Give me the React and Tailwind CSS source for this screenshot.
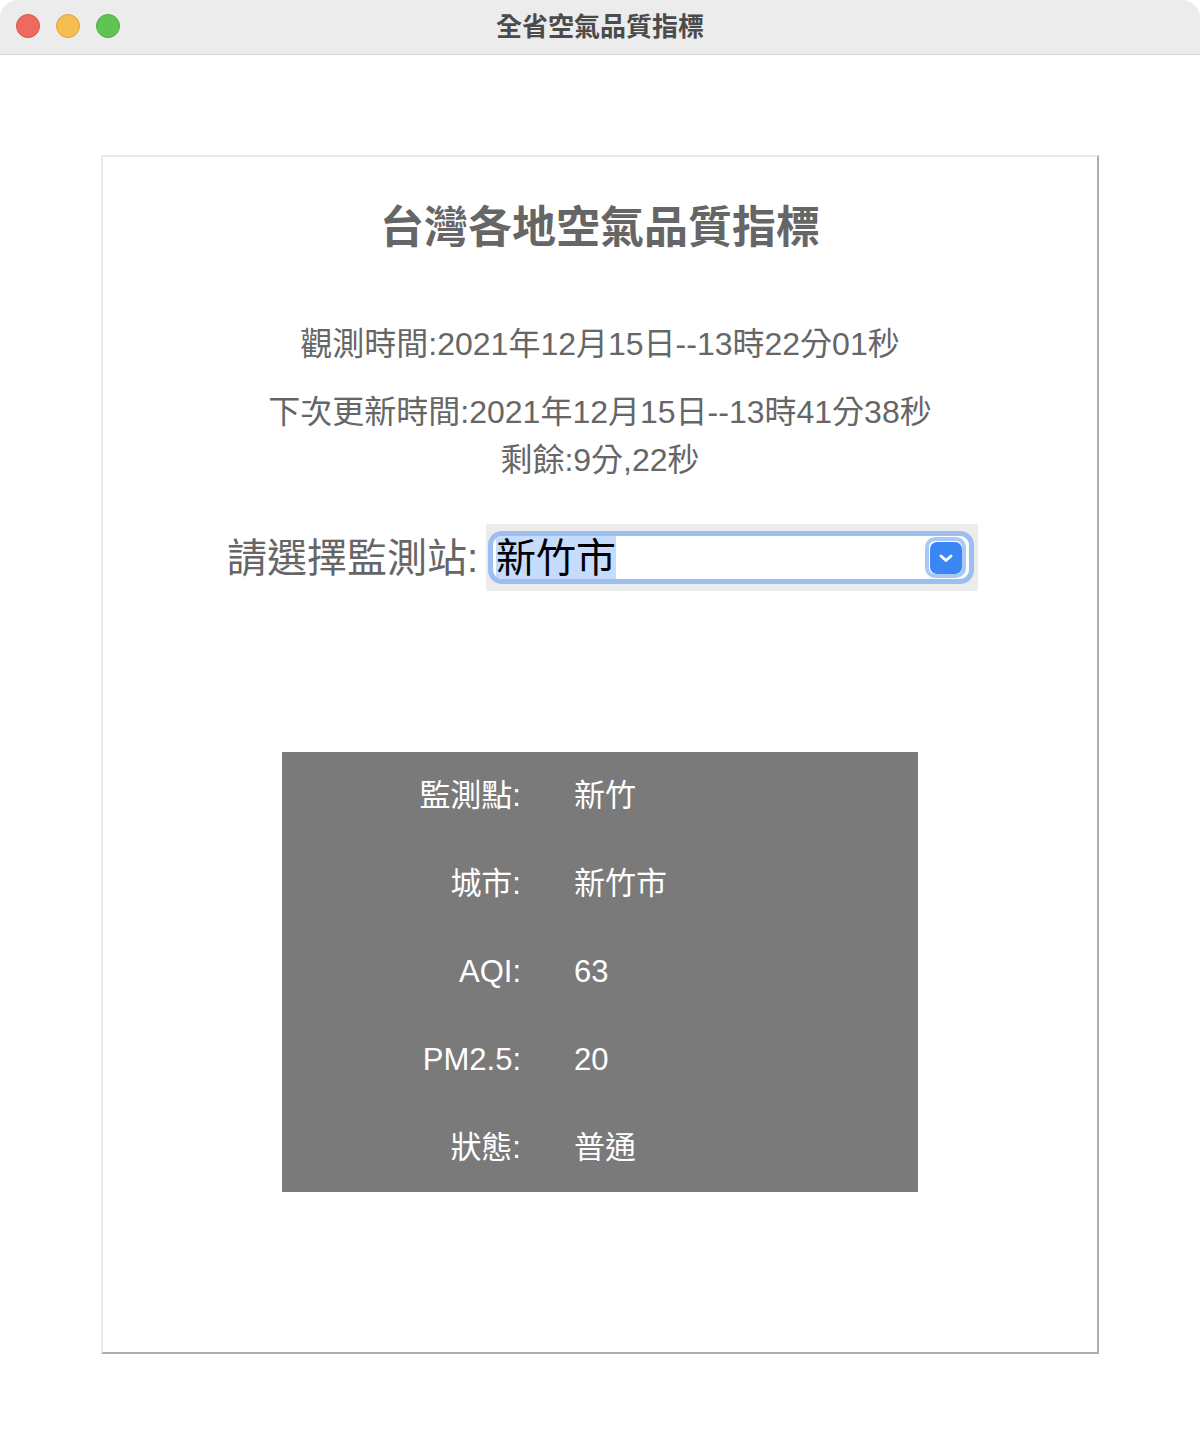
import React from "react";

const rows = [
  { label: "監測點:", value: "新竹" },
  { label: "城市:", value: "新竹市" },
  { label: "AQI:", value: "63" },
  { label: "PM2.5:", value: "20" },
  { label: "狀態:", value: "普通" },
];

const TitleBar = () => (
  <div className="relative flex h-[55px] items-center justify-center border-b border-[#d6d6d6] bg-[#ececec]">
    <div className="absolute left-[16px] top-[14px] flex gap-[16px]">
      <span className="h-[24px] w-[24px] rounded-full border border-[#d9534c] bg-[#ee6a5f]" />
      <span className="h-[24px] w-[24px] rounded-full border border-[#dca43a] bg-[#f6be50]" />
      <span className="h-[24px] w-[24px] rounded-full border border-[#4ea83f] bg-[#5fc454]" />
    </div>
    <span className="text-[26px] font-bold leading-none text-[#4b4b4b]">全省空氣品質指標</span>
  </div>
);

const StationSelect = () => (
  <div className="flex h-[67px] w-[492px] items-center bg-[#ececec] px-[2px]">
    <div className="relative flex h-[53px] w-[486px] items-center overflow-hidden rounded-[14px] border-[5px] border-[#9dbff0] bg-white">
      <span className="ml-[3px] flex h-full items-center bg-[#c6dcfc] text-[40px] leading-none text-black">
        新竹市
      </span>
      <span className="absolute right-[3px] top-[1px] flex h-[41px] w-[41px] items-center justify-center rounded-[10px] border-[4px] border-[#a9c8f3]">
        <span className="flex h-[32px] w-[32px] items-center justify-center rounded-[7px] bg-[#3a86f5]">
          <svg width="16" height="12" viewBox="0 0 16 12" fill="none">
            <path d="M3 4l5 4.5 5-4.5" stroke="white" strokeWidth="3" strokeLinecap="round" strokeLinejoin="round" />
          </svg>
        </span>
      </span>
    </div>
  </div>
);

const App = () => {
  return (
    <div className="h-[1454px] w-[1200px] overflow-hidden rounded-[18px] bg-white font-['Liberation_Sans','Noto_Sans_CJK_TC',sans-serif]">
      <TitleBar />
      <div className="px-[101px] pt-[100px]">
        <div className="border-2 border-t-[#e9e9e9] border-l-[#e9e9e9] border-r-[#acacac] border-b-[#acacac] pb-[160px] pt-[41px]">
          <h1 className="text-center text-[44px] font-bold leading-[60px] text-[#666666]">
            台灣各地空氣品質指標
          </h1>
          <p className="mt-[62px] text-center text-[32px] leading-[48px] text-[#666666]">
            觀測時間:2021年12月15日--13時22分01秒
          </p>
          <p className="mt-[20px] text-center text-[32px] leading-[48px] text-[#666666]">
            下次更新時間:2021年12月15日--13時41分38秒
            <br />
            剩餘:9分,22秒
          </p>
          <div className="mt-[40px] flex items-center justify-center pl-[5px]">
            <span className="mr-[8px] text-[40px] leading-none text-[#666666]">請選擇監測站:</span>
            <StationSelect />
          </div>
          <div className="mx-auto mt-[161px] w-[636px] bg-[#7a7a7a]">
            {rows.map((row) => (
              <div key={row.label} className="grid h-[88px] grid-cols-[239px_1fr] items-center text-[31px] text-white">
                <span className="text-right">{row.label}</span>
                <span className="pl-[53px]">{row.value}</span>
              </div>
            ))}
          </div>
        </div>
      </div>
    </div>
  );
};

export default App;
